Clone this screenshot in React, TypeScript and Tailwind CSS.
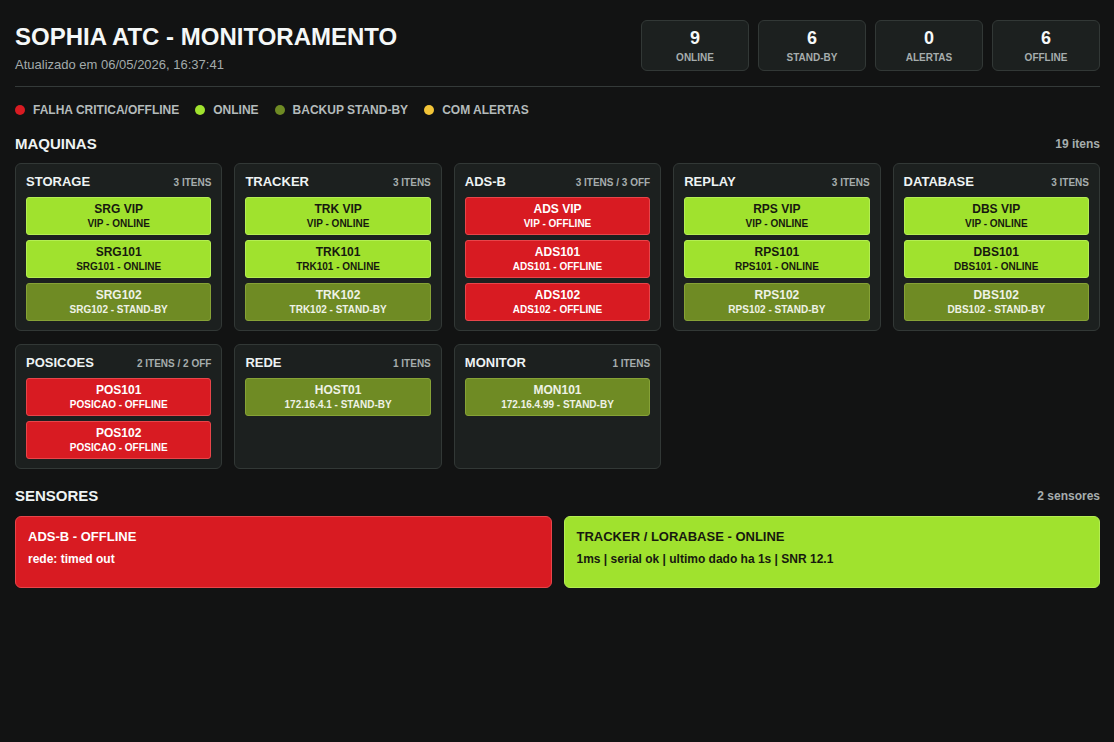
type Status = 'online' | 'standby' | 'offline';

type Item = { name: string; sub: string; status: Status };
type Group = { title: string; count: string; items: Item[] };

const groups: Group[] = [
  {
    title: 'STORAGE',
    count: '3 ITENS',
    items: [
      { name: 'SRG VIP', sub: 'VIP - ONLINE', status: 'online' },
      { name: 'SRG101', sub: 'SRG101 - ONLINE', status: 'online' },
      { name: 'SRG102', sub: 'SRG102 - STAND-BY', status: 'standby' },
    ],
  },
  {
    title: 'TRACKER',
    count: '3 ITENS',
    items: [
      { name: 'TRK VIP', sub: 'VIP - ONLINE', status: 'online' },
      { name: 'TRK101', sub: 'TRK101 - ONLINE', status: 'online' },
      { name: 'TRK102', sub: 'TRK102 - STAND-BY', status: 'standby' },
    ],
  },
  {
    title: 'ADS-B',
    count: '3 ITENS / 3 OFF',
    items: [
      { name: 'ADS VIP', sub: 'VIP - OFFLINE', status: 'offline' },
      { name: 'ADS101', sub: 'ADS101 - OFFLINE', status: 'offline' },
      { name: 'ADS102', sub: 'ADS102 - OFFLINE', status: 'offline' },
    ],
  },
  {
    title: 'REPLAY',
    count: '3 ITENS',
    items: [
      { name: 'RPS VIP', sub: 'VIP - ONLINE', status: 'online' },
      { name: 'RPS101', sub: 'RPS101 - ONLINE', status: 'online' },
      { name: 'RPS102', sub: 'RPS102 - STAND-BY', status: 'standby' },
    ],
  },
  {
    title: 'DATABASE',
    count: '3 ITENS',
    items: [
      { name: 'DBS VIP', sub: 'VIP - ONLINE', status: 'online' },
      { name: 'DBS101', sub: 'DBS101 - ONLINE', status: 'online' },
      { name: 'DBS102', sub: 'DBS102 - STAND-BY', status: 'standby' },
    ],
  },
  {
    title: 'POSICOES',
    count: '2 ITENS / 2 OFF',
    items: [
      { name: 'POS101', sub: 'POSICAO - OFFLINE', status: 'offline' },
      { name: 'POS102', sub: 'POSICAO - OFFLINE', status: 'offline' },
    ],
  },
  {
    title: 'REDE',
    count: '1 ITENS',
    items: [{ name: 'HOST01', sub: '172.16.4.1 - STAND-BY', status: 'standby' }],
  },
  {
    title: 'MONITOR',
    count: '1 ITENS',
    items: [{ name: 'MON101', sub: '172.16.4.99 - STAND-BY', status: 'standby' }],
  },
];

const stats = [
  { value: '9', label: 'ONLINE' },
  { value: '6', label: 'STAND-BY' },
  { value: '0', label: 'ALERTAS' },
  { value: '6', label: 'OFFLINE' },
];

const legend = [
  { label: 'FALHA CRITICA/OFFLINE', dot: 'bg-[#d81b22]' },
  { label: 'ONLINE', dot: 'bg-[#a0e22e]' },
  { label: 'BACKUP STAND-BY', dot: 'bg-[#6f8b24]' },
  { label: 'COM ALERTAS', dot: 'bg-[#f2c438]' },
];

const itemClass: Record<Status, string> = {
  online: 'bg-[#a0e22e] border-[#b4ee52] text-[#17190f]',
  standby: 'bg-[#6f8b24] border-[#86a236] text-[#eef2e6]',
  offline: 'bg-[#d81b22] border-[#e8454a] text-white',
};

function MachineCard({ group }: { group: Group }) {
  return (
    <div className="rounded-md border border-[#323836] bg-[#1c201f] px-[10px] pt-[10px] pb-[9px]">
      <div className="flex items-center justify-between h-[16px] mb-[7px]">
        <span className="text-[13px] font-bold text-[#eef3f3]">{group.title}</span>
        <span className="text-[10px] font-bold text-[#a6adad]">{group.count}</span>
      </div>
      <div className="flex flex-col gap-[5px]">
        {group.items.map((it) => (
          <div
            key={it.name}
            className={`h-[38px] rounded-[3px] border flex flex-col items-center justify-center ${itemClass[it.status]}`}
          >
            <span className="text-[12px] font-bold leading-[15px]">{it.name}</span>
            <span className="text-[10px] font-bold leading-[13px]">{it.sub}</span>
          </div>
        ))}
      </div>
    </div>
  );
}

export default function App() {
  return (
    <div
      className="min-h-screen bg-[#121313] text-white pl-[15px] pr-[14px] pt-[20px] pb-8"
      style={{ fontFamily: '"Liberation Sans", Arial, sans-serif' }}
    >
      <header className="flex justify-between items-start pb-[15px] border-b border-[#343a39]">
        <div className="h-[51px]">
          <h1 className="text-[24px] font-bold leading-[28px] mt-[3px] text-[#f5f8f8]">
            SOPHIA ATC - MONITORAMENTO
          </h1>
          <p className="text-[13px] leading-[16px] mt-[6px] text-[#a3abab]">
            Atualizado em 06/05/2026, 16:37:41
          </p>
        </div>
        <div className="flex gap-[9px]">
          {stats.map((s) => (
            <div
              key={s.label}
              className="w-[108px] h-[51px] rounded-md border border-[#323836] bg-[#1c201f] flex flex-col items-center justify-center"
            >
              <span className="text-[18px] font-bold leading-[20px] text-[#f5f8f8]">{s.value}</span>
              <span className="text-[10px] font-bold leading-[13px] mt-[3px] text-[#a6adad]">{s.label}</span>
            </div>
          ))}
        </div>
      </header>

      <div className="flex items-center gap-4 mt-[17px] h-[12px]">
        {legend.map((l) => (
          <div key={l.label} className="flex items-center gap-[8px]">
            <span className={`w-[10px] h-[10px] rounded-full ${l.dot}`} />
            <span className="text-[12px] font-bold text-[#b4bbbb]">{l.label}</span>
          </div>
        ))}
      </div>

      <div className="flex justify-between items-center mt-[19px] h-[18px]">
        <h2 className="text-[15px] font-bold text-[#eef3f3]">MAQUINAS</h2>
        <span className="text-[12px] font-bold text-[#a6adad]">19 itens</span>
      </div>

      <div className="grid grid-cols-5 gap-x-3 gap-y-[13px] mt-[10px]">
        {groups.map((g) => (
          <MachineCard key={g.title} group={g} />
        ))}
      </div>

      <div className="flex justify-between items-center mt-[18px] h-[18px]">
        <h2 className="text-[15px] font-bold text-[#eef3f3]">SENSORES</h2>
        <span className="text-[12px] font-bold text-[#a6adad]">2 sensores</span>
      </div>

      <div className="grid grid-cols-2 gap-3 mt-[11px]">
        <div className="h-[72px] rounded-md border border-[#e8454a] bg-[#d81b22] px-[12px] pt-[12px] text-white">
          <div className="text-[13px] font-bold leading-[16px]">ADS-B - OFFLINE</div>
          <div className="text-[12px] font-bold leading-[15px] mt-[7px]">rede: timed out</div>
        </div>
        <div className="h-[72px] rounded-md border border-[#b4ee52] bg-[#a0e22e] px-[12px] pt-[12px] text-[#17190f]">
          <div className="text-[13px] font-bold leading-[16px]">TRACKER / LORABASE - ONLINE</div>
          <div className="text-[12px] font-bold leading-[15px] mt-[7px]">
            1ms | serial ok | ultimo dado ha 1s | SNR 12.1
          </div>
        </div>
      </div>
    </div>
  );
}
